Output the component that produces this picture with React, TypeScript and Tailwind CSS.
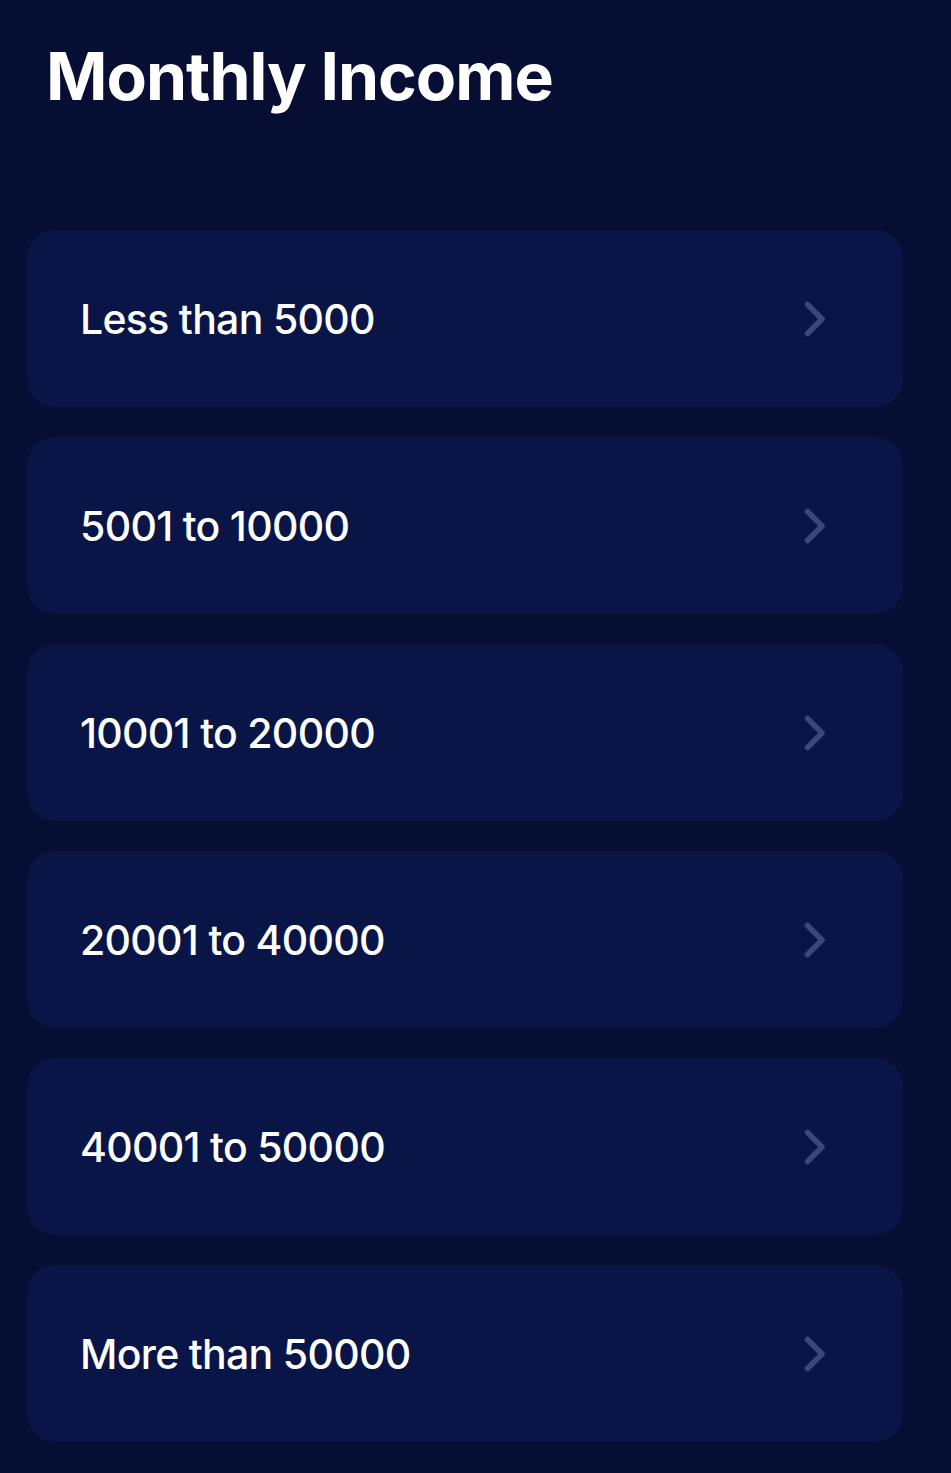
const OPTIONS = [
  "Less than 5000",
  "5001 to 10000",
  "10001 to 20000",
  "20001 to 40000",
  "40001 to 50000",
  "More than 50000",
]

// chevron drawn by hand: taller than lucide's, rounded caps
function Chevron() {
  return (
    <svg width="22" height="36" viewBox="0 0 22 36" fill="none" className="shrink-0">
      <path
        d="M3.5 3.5 L18 18 L3.5 32.5"
        stroke="#3b4679"
        strokeWidth="5.5"
        strokeLinecap="round"
        strokeLinejoin="round"
      />
    </svg>
  )
}

export default function App() {
  return (
    <main
      className="min-h-screen w-full bg-[#060e33] text-white"
      style={{ fontFamily: "Inter, 'Noto Sans', sans-serif" }}
    >
      <h1 className="pl-[46px] pt-[36px] text-[66px] font-bold leading-[80px] tracking-[-1px]">
        Monthly Income
      </h1>

      <div className="mt-[114px] flex flex-col gap-[30px] pl-[27px] pr-[48px] pb-[31px]">
        {OPTIONS.map((label) => (
          <button
            key={label}
            className="flex h-[177px] w-full items-center justify-between rounded-[28px] bg-[#091547] pl-[53px] pr-[77px] text-left"
          >
            <span className="pt-[3px] text-[41px] font-medium tracking-[-0.7px]">{label}</span>
            <Chevron />
          </button>
        ))}
      </div>
    </main>
  )
}
